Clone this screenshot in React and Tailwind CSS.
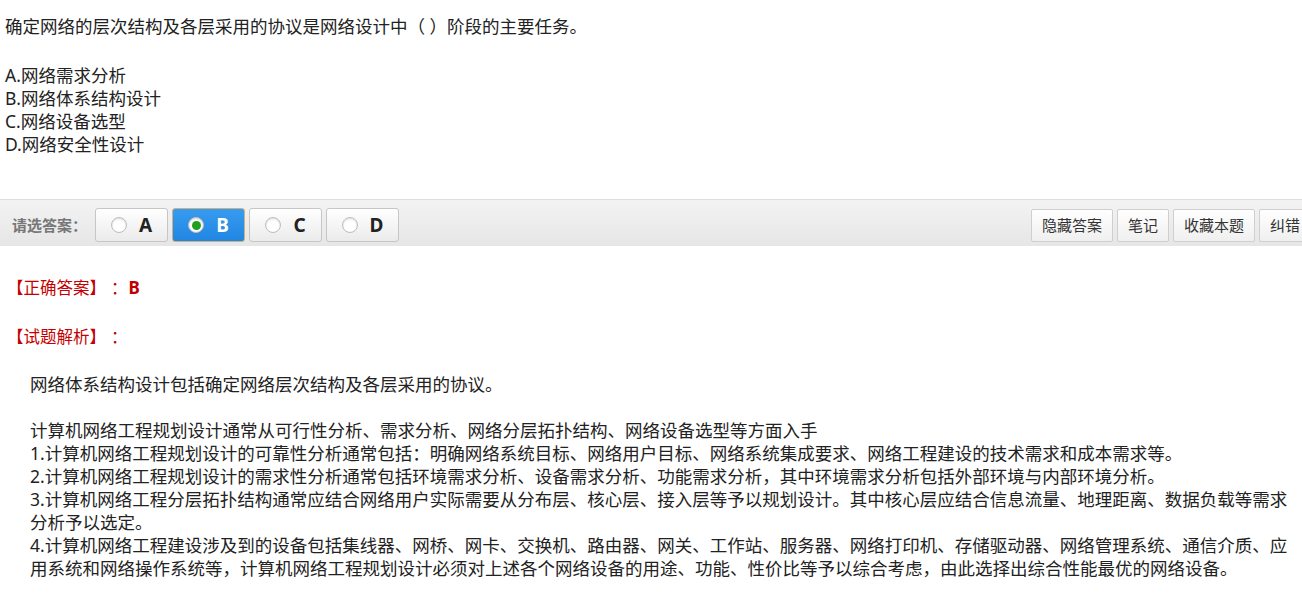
import { useState } from 'react';

const options = [
  { key: 'A', text: '网络需求分析' },
  { key: 'B', text: '网络体系结构设计' },
  { key: 'C', text: '网络设备选型' },
  { key: 'D', text: '网络安全性设计' },
];

const tools = ['隐藏答案', '笔记', '收藏本题', '纠错'];

// analysis lines, split where the original page wraps
const analysis = [
  '网络体系结构设计包括确定网络层次结构及各层采用的协议。',
  '',
  '计算机网络工程规划设计通常从可行性分析、需求分析、网络分层拓扑结构、网络设备选型等方面入手',
  '1.计算机网络工程规划设计的可靠性分析通常包括：明确网络系统目标、网络用户目标、网络系统集成要求、网络工程建设的技术需求和成本需求等。',
  '2.计算机网络工程规划设计的需求性分析通常包括环境需求分析、设备需求分析、功能需求分析，其中环境需求分析包括外部环境与内部环境分析。',
  '3.计算机网络工程分层拓扑结构通常应结合网络用户实际需要从分布层、核心层、接入层等予以规划设计。其中核心层应结合信息流量、地理距离、数据负载等需求',
  '分析予以选定。',
  '4.计算机网络工程建设涉及到的设备包括集线器、网桥、网卡、交换机、路由器、网关、工作站、服务器、网络打印机、存储驱动器、网络管理系统、通信介质、应',
  '用系统和网络操作系统等，计算机网络工程规划设计必须对上述各个网络设备的用途、功能、性价比等予以综合考虑，由此选择出综合性能最优的网络设备。',
];

function Radio({ checked }) {
  return (
    <span className="flex items-center justify-center w-[16px] h-[16px] rounded-full bg-white border border-[#bdbdbd] shadow-[inset_0_1px_2px_rgba(0,0,0,0.15)]">
      {checked && <span className="w-[9px] h-[9px] rounded-full bg-[#1f9e1f]" />}
    </span>
  );
}

export default function App() {
  const [picked, setPicked] = useState('B');

  return (
    <div className="min-h-screen bg-white text-[#222] font-['Noto_Sans','Noto_Sans_CJK_SC',sans-serif] overflow-hidden">
      {/* question */}
      <div className="pl-[5px] pt-[15px] text-[17.5px] leading-[23px]">
        <div>确定网络的层次结构及各层采用的协议是网络设计中（ ）阶段的主要任务。</div>
        <div className="mt-[26px]">
          {options.map((o) => (
            <div key={o.key}>
              {o.key}.{o.text}
            </div>
          ))}
        </div>
      </div>

      {/* answer bar */}
      <div className="mt-[43px] h-[47px] border-t border-[#dedede] bg-gradient-to-b from-[#f3f3f3] to-[#e6e6e6] flex items-start justify-between pt-[8px] pl-[12px] overflow-hidden">
        <div className="flex items-center">
          <span className="text-[15px] font-bold text-[#777] leading-[34px] mr-[8px]">请选答案：</span>
          <div className="flex gap-[4px]">
            {options.map((o) => {
              const on = picked === o.key;
              return (
                <button
                  key={o.key}
                  onClick={() => setPicked(o.key)}
                  className={
                    on
                      ? 'w-[73px] h-[34px] rounded-[3px] border border-[#cdb27c] bg-gradient-to-b from-[#379bf0] to-[#2086e2] flex items-center justify-center gap-[12px] text-white'
                      : 'w-[73px] h-[34px] rounded-[3px] border border-[#c6c6c6] bg-gradient-to-b from-[#ffffff] to-[#ebebeb] flex items-center justify-center gap-[12px] text-[#222]'
                  }
                >
                  <Radio checked={on} />
                  <span className="text-[19px] font-bold leading-none">{o.key}</span>
                </button>
              );
            })}
          </div>
        </div>
        <div className="flex gap-[4px] mr-[-9px] pt-[1px]">
          {tools.map((t) => (
            <button
              key={t}
              className="h-[33px] px-[10px] rounded-[2px] border border-[#cfcfcf] bg-gradient-to-b from-[#ffffff] to-[#efefef] text-[15px] text-[#333]"
            >
              {t}
            </button>
          ))}
        </div>
      </div>

      {/* answer & analysis */}
      <div className="mt-[30px] pl-[7px] text-[16.5px] leading-[23px] text-[#c40000] flex items-end">
        <span>【正确答案】</span>
        <span className="ml-[5px]">：</span>
        <span className="ml-[1px] text-[17px] font-bold text-[#c00000]">{picked}</span>
      </div>
      <div className="mt-[26px] pl-[7px] text-[16.5px] leading-[23px] text-[#c40000] flex items-end">
        <span>【试题解析】</span>
        <span className="ml-[5px]">：</span>
      </div>

      <div className="mt-[25px] pl-[30px] text-[17.5px] leading-[23px] whitespace-nowrap">
        {analysis.map((line, i) => (
          <div key={i} className="h-[23px]">
            {line}
          </div>
        ))}
      </div>
    </div>
  );
}
